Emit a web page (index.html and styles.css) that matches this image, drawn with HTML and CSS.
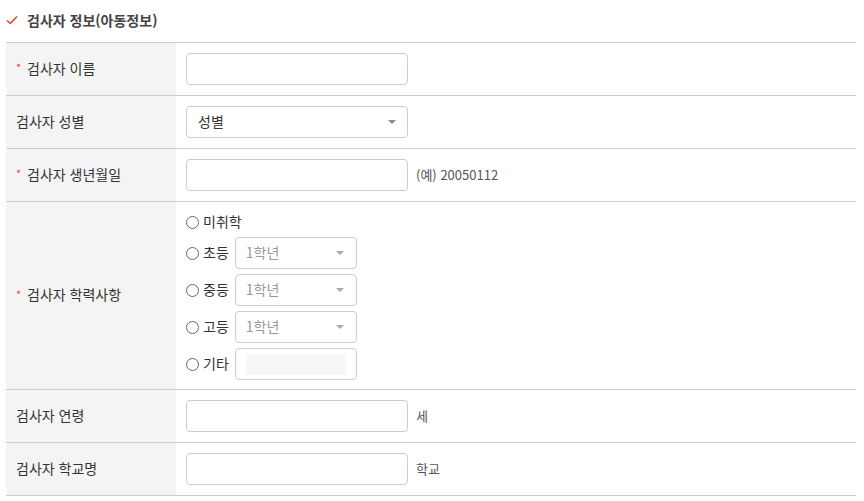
FILE: index.html
```html
<!DOCTYPE html>
<html lang="ko">
<head>
  <meta charset="UTF-8">
  <meta name="viewport" content="width=device-width, initial-scale=1.0">
  <title>검사자 정보</title>
  <link rel="stylesheet" href="styles.css">
</head>
<body>
  <div class="section-title">
    <svg class="check" width="12" height="10" viewBox="0 0 12 10"><path d="M1 5.5 L4.3 8.5 L11 1.5" fill="none" stroke="#e8432d" stroke-width="1.6"/></svg>
    <span>검사자 정보(아동정보)</span>
  </div>

  <div class="form-table">
    <div class="row">
      <div class="label"><span class="star">*</span>검사자 이름</div>
      <div class="field"><div class="input"></div></div>
    </div>
    <div class="row">
      <div class="label">검사자 성별</div>
      <div class="field">
        <div class="select"><span>성별</span><i class="arrow"></i></div>
      </div>
    </div>
    <div class="row">
      <div class="label"><span class="star">*</span>검사자 생년월일</div>
      <div class="field"><div class="input"></div><span class="suffix">(예) 20050112</span></div>
    </div>
    <div class="row">
      <div class="label"><span class="star">*</span>검사자 학력사항</div>
      <div class="field edu">
        <div class="option first"><i class="radio"></i><span class="opt-text">미취학</span></div>
        <div class="option"><i class="radio"></i><span class="opt-text">초등</span>
          <div class="select small"><span>1학년</span><i class="arrow"></i></div></div>
        <div class="option"><i class="radio"></i><span class="opt-text">중등</span>
          <div class="select small"><span>1학년</span><i class="arrow"></i></div></div>
        <div class="option"><i class="radio"></i><span class="opt-text">고등</span>
          <div class="select small"><span>1학년</span><i class="arrow"></i></div></div>
        <div class="option"><i class="radio"></i><span class="opt-text">기타</span>
          <div class="input small etc"><span class="etc-box"></span></div></div>
      </div>
    </div>
    <div class="row">
      <div class="label">검사자 연령</div>
      <div class="field"><div class="input"></div><span class="suffix">세</span></div>
    </div>
    <div class="row">
      <div class="label">검사자 학교명</div>
      <div class="field"><div class="input"></div><span class="suffix">학교</span></div>
    </div>
  </div>
</body>
</html>
```

FILE: styles.css
```css
body {
  margin: 0;
  padding: 0 8px 0 6px;
  background: #fff;
  color: #333;
  font-family: "Noto Sans CJK KR", "Noto Sans", sans-serif;
  font-size: 14px;
}
.section-title {
  display: flex;
  align-items: center;
  height: 42px;
  font-weight: bold;
  color: #444;
}
.section-title .check {
  margin-right: 9px;
  margin-top: -2px;
}
.section-title span {
  margin-top: -3px;
}
.form-table {
  border-top: 1px solid #ccc;
}
.row {
  display: grid;
  grid-template-columns: 170px 1fr;
  border-bottom: 1px solid #ccc;
}
.label {
  background: #f4f4f4;
  display: flex;
  align-items: center;
  padding: 0 0 3px 10px;
  color: #333;
}
.star {
  color: #e8432d;
  font-size: 11px;
  width: 11px;
  margin-top: -1px;
}
.field {
  display: flex;
  align-items: center;
  padding: 10px;
  min-height: 32px;
}
.input,
.select {
  box-sizing: border-box;
  width: 222px;
  height: 32px;
  border: 1px solid #ccc;
  border-radius: 4px;
  background: #fff;
}
.select {
  display: flex;
  align-items: center;
  justify-content: space-between;
  padding: 0 11px;
}
.select span {
  margin-top: -3px;
}
.select .arrow {
  width: 0;
  height: 0;
  border-left: 4px solid transparent;
  border-right: 4px solid transparent;
  border-top: 4px solid #888;
}
.suffix {
  margin-left: 8px;
  margin-top: -1px;
  font-size: 13px;
  color: #555;
}
.edu {
  flex-direction: column;
  align-items: flex-start;
  gap: 5px;
  padding-bottom: 9px;
}
.option {
  display: flex;
  align-items: center;
  height: 32px;
}
.option.first {
  height: 20px;
}
.radio {
  box-sizing: border-box;
  width: 13px;
  height: 13px;
  border: 1px solid #666;
  border-radius: 50%;
  margin-right: 4px;
}
.opt-text {
  margin: -3px 6px 0 0;
  color: #333;
  white-space: nowrap;
}
.select.small,
.input.small {
  width: 122px;
  padding: 0 10px;
}
.select.small span {
  color: #999;
}
.select.small .arrow {
  border-top-color: #aaa;
  margin-right: 2px;
}
.etc {
  display: flex;
  align-items: center;
}
.etc-box {
  width: 100px;
  height: 21px;
  background: #f7f7f7;
}
```
